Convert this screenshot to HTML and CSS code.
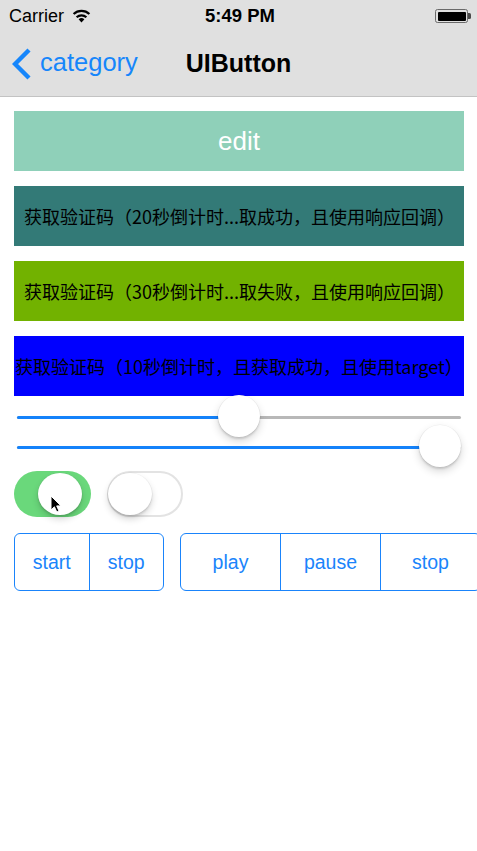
FILE: index.html
```html
<!DOCTYPE html>
<html lang="zh">
<head>
<meta charset="utf-8">
<title>UIButton</title>
<link rel="stylesheet" href="styles.css">
</head>
<body>
<header class="bar">
  <div class="status">
    <div class="carrier">Carrier
      <svg class="wifi" width="19" height="14" viewBox="0 0 19 14">
        <path d="M9.5 13.5 L6.6 10.3 A4.3 4.3 0 0 1 12.4 10.3 Z" fill="#000"/>
        <path d="M4.6 8.2 A7.2 7.2 0 0 1 14.4 8.2" fill="none" stroke="#000" stroke-width="2.2"/>
        <path d="M1.6 5 A11.4 11.4 0 0 1 17.4 5" fill="none" stroke="#000" stroke-width="2.2"/>
      </svg>
    </div>
    <div class="time">5:49 PM</div>
    <div class="battery-wrap"><span class="battery"><span class="battery-level"></span></span><span class="battery-nub"></span></div>
  </div>
  <nav class="nav">
    <div class="back">
      <svg class="chevron" width="20" height="32" viewBox="0 0 20 32">
        <polyline points="17,2 3,16 17,30" fill="none" stroke="#1686fb" stroke-width="4.4"/>
      </svg>
      <span class="back-label">category</span>
    </div>
    <div class="title">UIButton</div>
    <div></div>
  </nav>
</header>
<main class="content">
  <div class="btn btn-edit">edit</div>
  <div class="btn btn-text btn-teal">获取验证码（20秒倒计时...取成功，且使用响应回调）</div>
  <div class="btn btn-text btn-green">获取验证码（30秒倒计时...取失败，且使用响应回调）</div>
  <div class="btn btn-text btn-blue">获取验证码（10秒倒计时，且获取成功，且使用target）</div>

  <div class="sliders">
    <div class="slider">
      <div class="track"><div class="fill" style="width: calc(21px + 0.5 * (100% - 42px))"></div></div>
      <div class="thumb" style="left: calc(0.5 * (100% - 42px))"></div>
    </div>
    <div class="slider">
      <div class="track"><div class="fill" style="width: calc(21px + 1 * (100% - 42px))"></div></div>
      <div class="thumb" style="left: calc(1 * (100% - 42px))"></div>
    </div>
  </div>

  <div class="switches">
    <div class="switch switch-on">
      <span class="knob knob-on"></span>
      <svg class="cursor" width="12" height="18" viewBox="0 0 12 18">
        <path d="M1 1 L1 15 L4.4 11.8 L6.8 17 L9 16 L6.7 10.9 L11 10.9 Z" fill="#000" stroke="#fff" stroke-width="1"/>
      </svg>
    </div>
    <div class="switch switch-off">
      <span class="knob knob-off"></span>
    </div>
  </div>

  <div class="segments">
    <div class="segmented seg-small">
      <div class="seg">start</div>
      <div class="seg">stop</div>
    </div>
    <div class="segmented seg-large">
      <div class="seg">play</div>
      <div class="seg">pause</div>
      <div class="seg">stop</div>
    </div>
  </div>
</main>
</body>
</html>
```
FILE: styles.css
```css
html, body {
  margin: 0;
  padding: 0;
  background: #fff;
}
body {
  width: 477px;
  height: 851px;
  overflow: hidden;
  font-family: "Liberation Sans", "Noto Sans CJK SC", sans-serif;
  color: #000;
}

/* Header */
.bar {
  background: #e0e0e0;
  border-bottom: 1px solid #c3c3c3;
}
.status {
  height: 32px;
  display: grid;
  grid-template-columns: 1fr auto 1fr;
  align-items: center;
}
.carrier {
  padding-left: 9px;
  font-size: 18px;
  display: flex;
  align-items: center;
  gap: 8px;
  line-height: 1;
}
.wifi {
  display: block;
  margin-top: -1px;
}
.time {
  font-size: 18.5px;
  font-weight: bold;
  line-height: 1;
  padding-left: 3px;
}
.battery-wrap {
  justify-self: end;
  display: flex;
  align-items: center;
  padding-right: 6px;
}
.battery {
  width: 33px;
  height: 14px;
  box-sizing: border-box;
  border: 1.5px solid #6a6a6a;
  border-radius: 2.5px;
  padding: 1.5px;
  display: flex;
}
.battery-level {
  flex: 1;
  background: #000;
  border-radius: 1px;
}
.battery-nub {
  width: 3px;
  height: 6px;
  background: #4a4a4a;
  border-radius: 0 1.5px 1.5px 0;
}

.nav {
  height: 64px;
  display: grid;
  grid-template-columns: 1fr auto 1fr;
  align-items: center;
}
.back {
  display: flex;
  align-items: center;
  gap: 8px;
  padding-left: 12px;
  color: #1686fb;
  font-size: 25.5px;
  line-height: 1;
}
.chevron {
  display: block;
  margin-top: -1px;
}
.back-label {
  margin-top: -3px;
}
.title {
  font-size: 25px;
  font-weight: bold;
  line-height: 1;
  margin-top: -2px;
}

/* Content */
.content {
  padding: 14px 13px 0 14px;
}
.btn {
  height: 60px;
  display: flex;
  align-items: center;
  white-space: nowrap;
  overflow: hidden;
  margin-bottom: 15px;
}
.btn-edit {
  background: #8fd0b9;
  color: #fff;
  justify-content: center;
  font-size: 26px;
  font-weight: 300;
}
.btn-text {
  font-size: 18px;
  font-family: "Noto Sans CJK SC", sans-serif;
  color: #000;
  padding-left: 10px;
}
.btn-teal {
  background: #337a77;
}
.btn-green {
  background: #72b200;
}
.btn-blue {
  background: #0000ff;
  padding-left: 1px;
  margin-bottom: 0;
}

/* Sliders */
.sliders {
  margin: 6px 3px 0 3px;
}
.slider {
  position: relative;
  height: 30px;
  display: flex;
  align-items: center;
}
.track {
  flex: 1;
  height: 3px;
  border-radius: 2px;
  background: #b8b8b8;
  display: flex;
}
.fill {
  background: #1482fa;
  border-radius: 2px;
}
.thumb {
  position: absolute;
  top: -7px;
  width: 42px;
  height: 42px;
  border-radius: 50%;
  background: #fff;
  box-shadow: 0 0 0 0.5px rgba(0,0,0,0.06), 0 4px 9px rgba(0,0,0,0.16), 0 2px 2px rgba(0,0,0,0.12);
}

/* Switches */
.switches {
  margin-top: 9px;
  display: flex;
  gap: 16px;
}
.switch {
  position: relative;
  width: 77px;
  height: 46px;
  border-radius: 23px;
  box-sizing: border-box;
}
.switch-on {
  background: #6ad87b;
}
.switch-off {
  background: #fff;
  border: 2px solid #e3e3e3;
  width: 76px;
}
.knob {
  position: absolute;
  width: 44px;
  height: 42px;
  border-radius: 22px / 21px;
  background: #fff;
  box-shadow: 0 0 0 0.5px rgba(0,0,0,0.05), 0 4px 7px rgba(0,0,0,0.16), 0 2px 2px rgba(0,0,0,0.1);
}
.knob-on {
  left: 24px;
  top: 2px;
}
.knob-off {
  left: -1px;
  top: 0;
}
.cursor {
  position: absolute;
  left: 36px;
  top: 24px;
}

/* Segmented controls */
.segments {
  margin-top: 16px;
  display: flex;
  gap: 16px;
}
.segmented {
  height: 58px;
  box-sizing: border-box;
  border: 1.5px solid #1a84fb;
  border-radius: 6px;
  display: flex;
  flex-shrink: 0;
}
.seg-small {
  width: 150px;
}
.seg-large {
  width: 301px;
}
.seg {
  flex: 1;
  display: flex;
  align-items: center;
  justify-content: center;
  color: #1a84fb;
  font-size: 19.5px;
}
.seg + .seg {
  border-left: 1.5px solid #1a84fb;
}
```
